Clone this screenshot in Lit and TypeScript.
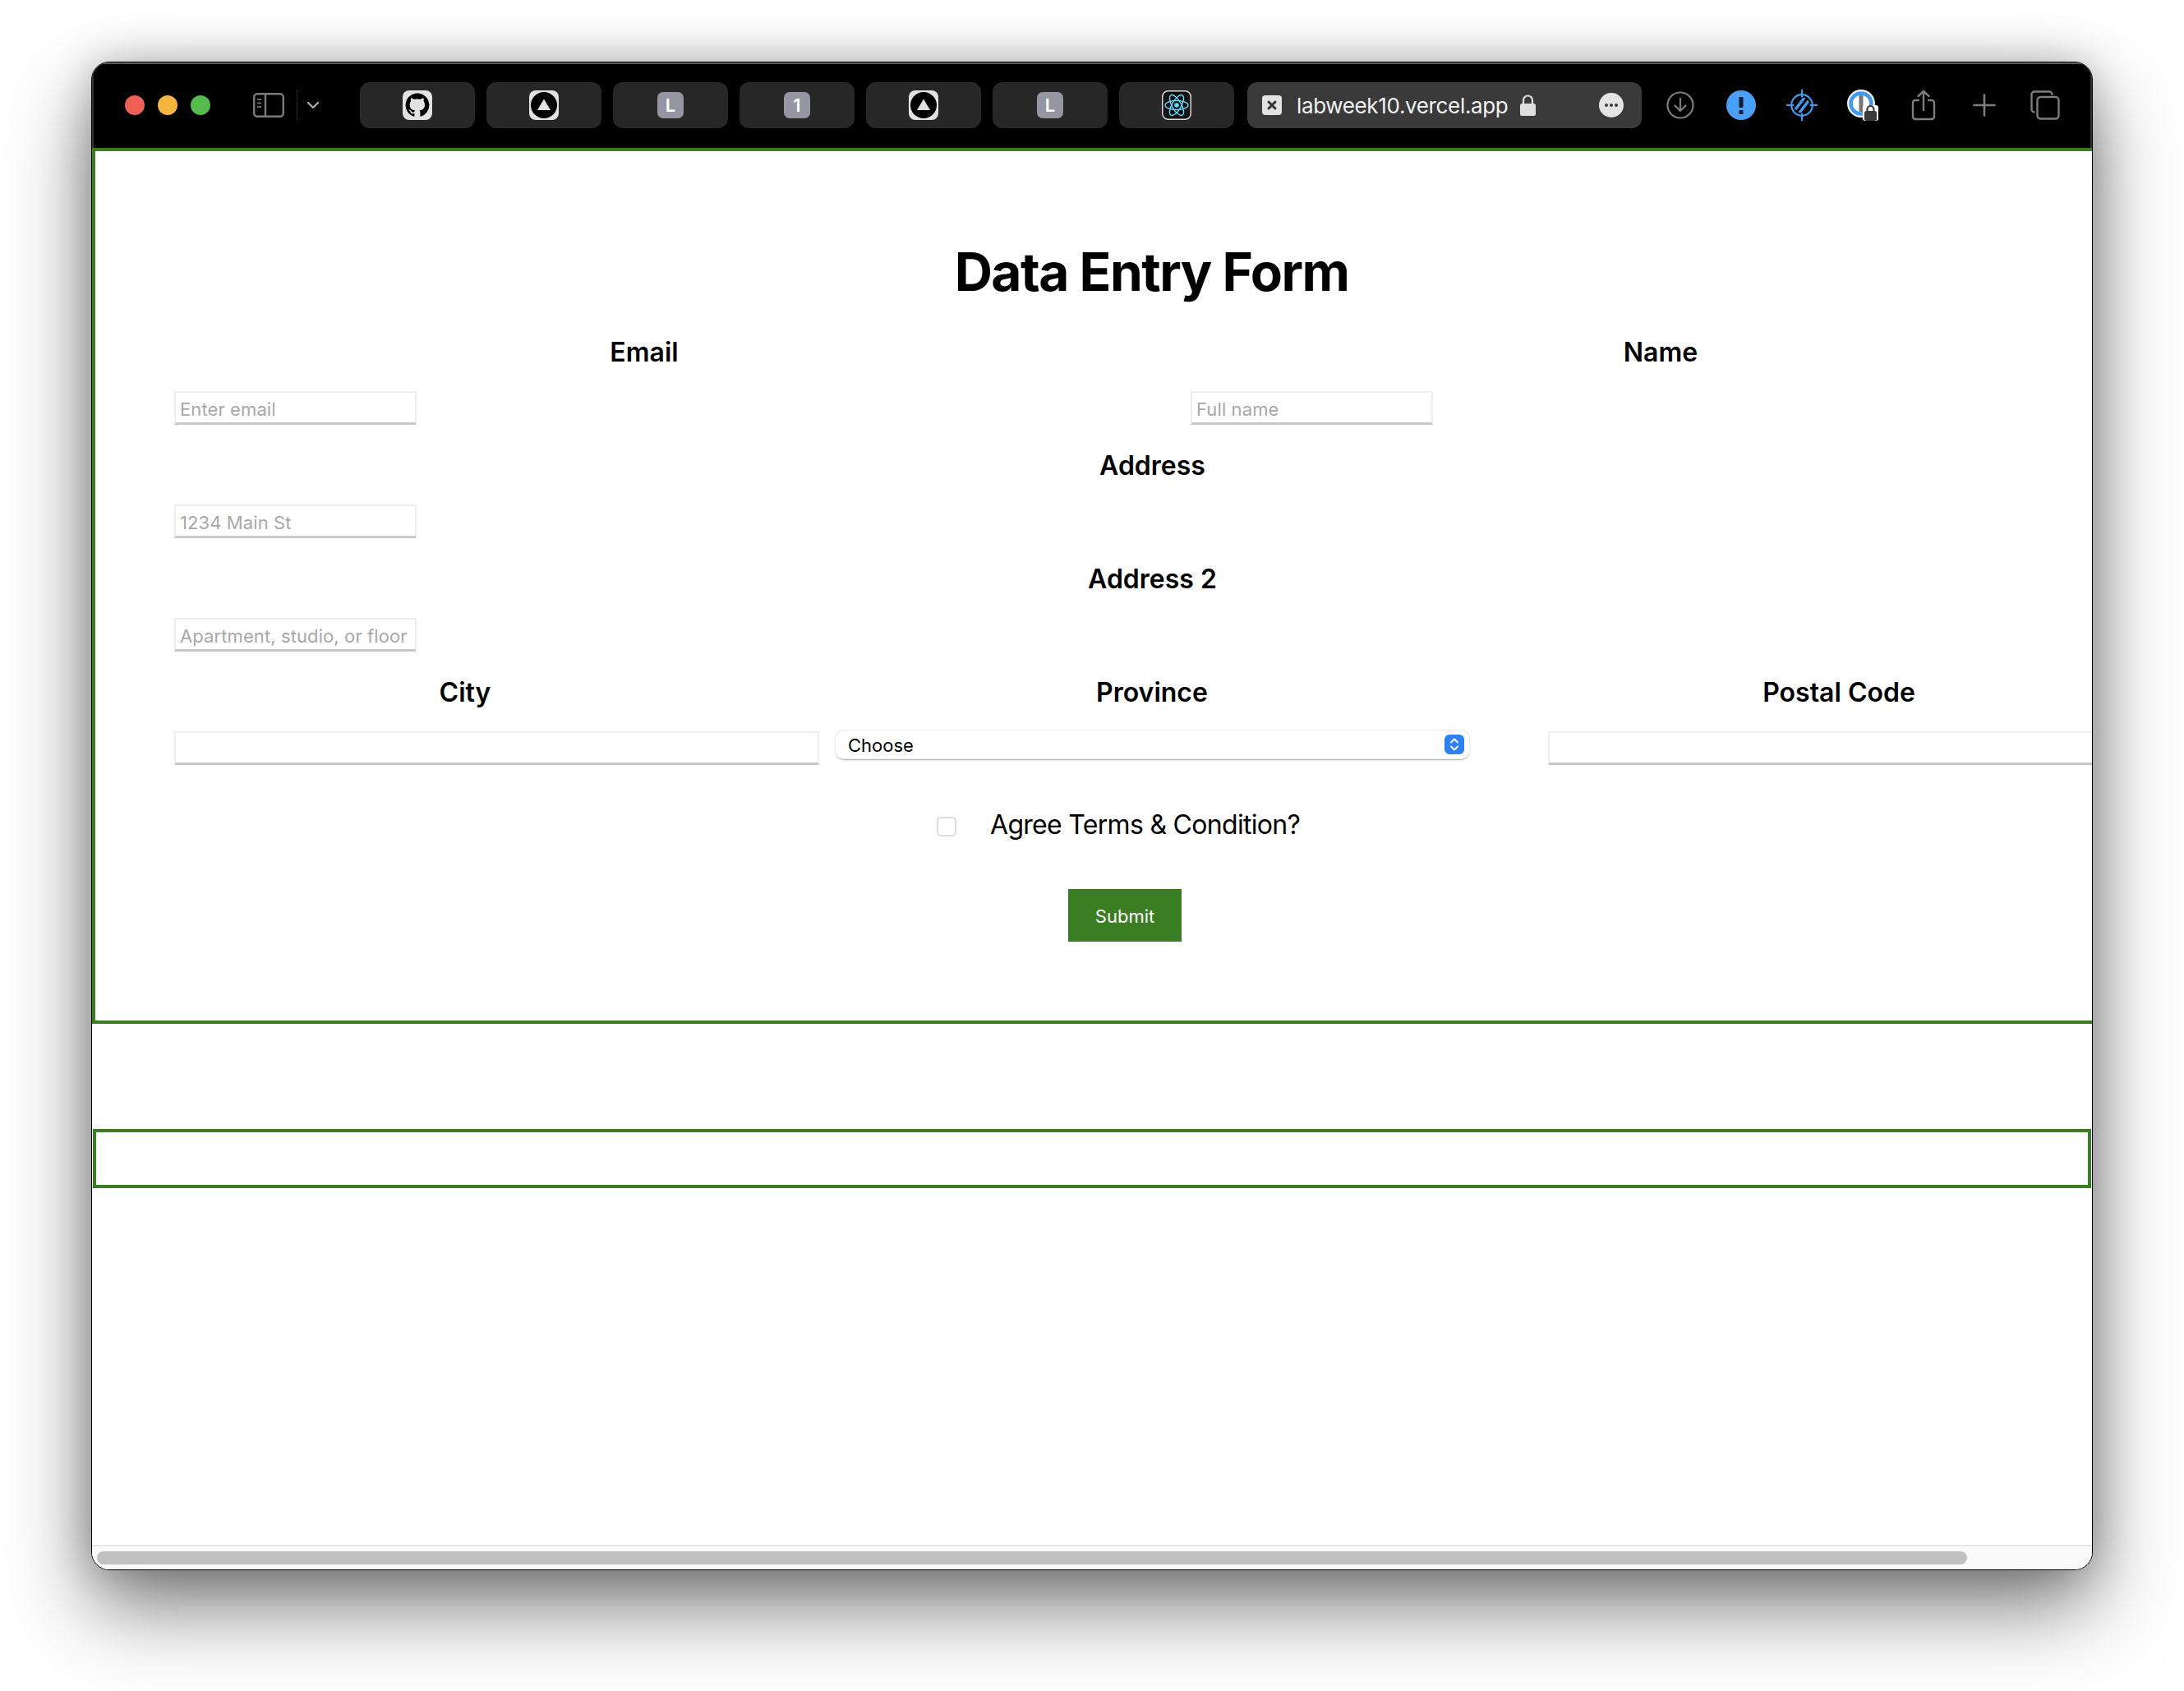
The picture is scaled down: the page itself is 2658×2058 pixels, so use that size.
import { LitElement, html, css, svg } from 'lit';
import { customElement } from 'lit/decorators.js';

const GITHUB_MARK =
  'M8 0C3.58 0 0 3.58 0 8c0 3.54 2.29 6.53 5.47 7.59.4.07.55-.17.55-.38 0-.19-.01-.82-.01-1.49-2.01.37-2.53-.49-2.69-.94-.09-.23-.48-.94-.82-1.13-.28-.15-.68-.52-.01-.53.63-.01 1.08.58 1.23.82.72 1.21 1.87.87 2.2.66.07-.52.28-.87.51-1.07-1.78-.2-3.64-.89-3.64-3.95 0-.87.31-1.59.82-2.15-.08-.2-.36-1.02.08-2.12 0 0 .67-.21 2.2.82.64-.18 1.32-.27 2-.27.68 0 1.36.09 2 .27 1.53-1.04 2.2-.82 2.2-.82.44 1.1.16 1.92.08 2.12.51.56.82 1.27.82 2.15 0 3.07-1.87 3.75-3.65 3.95.29.25.54.73.54 1.48 0 1.07-.01 1.93-.01 2.2 0 .21.15.46.55.38A8.013 8.013 0 0016 8c0-4.42-3.58-8-8-8z';

const githubIcon = svg`<svg width="36" height="36" viewBox="0 0 36 36">
  <rect width="36" height="36" rx="8" fill="#e2e2e2"/>
  <g transform="translate(3.6 3.6) scale(1.8)"><path d=${GITHUB_MARK} fill="#000"/></g>
</svg>`;

const vercelIcon = svg`<svg width="36" height="36" viewBox="0 0 36 36">
  <rect width="36" height="36" rx="8" fill="#e2e2e2"/>
  <circle cx="18" cy="18" r="16" fill="#000"/>
  <path d="M18 10.5 26 24H10z" fill="#e2e2e2"/>
</svg>`;

const reactIcon = svg`<svg width="36" height="36" viewBox="0 0 36 36">
  <rect x=".75" y=".75" width="34.5" height="34.5" rx="7" fill="#111" stroke="#d8d8d8" stroke-width="1.5"/>
  <g fill="none" stroke="#61dafb" stroke-width="1.4">
    <ellipse cx="18" cy="18" rx="14" ry="5.6"/>
    <ellipse cx="18" cy="18" rx="14" ry="5.6" transform="rotate(60 18 18)"/>
    <ellipse cx="18" cy="18" rx="14" ry="5.6" transform="rotate(120 18 18)"/>
  </g>
  <circle cx="18" cy="18" r="2.8" fill="#61dafb"/>
</svg>`;

const sidebarIcon = svg`<svg width="38" height="30" viewBox="0 0 38 30" fill="none" stroke="#7b7b7b" stroke-width="2.4">
  <rect x="1.2" y="1.2" width="35.6" height="27.6" rx="4"/>
  <path d="M15 1.2v27.6"/>
  <path d="M5 8h5M5 12.5h5M5 17h5" stroke-width="2" stroke="#6a6a6a"/>
</svg>`;

const chevronIcon = svg`<svg width="16" height="10" viewBox="0 0 16 10" fill="none" stroke="#a8a8a8" stroke-width="2.4" stroke-linecap="round" stroke-linejoin="round">
  <path d="M2 2l6 6 6-6"/>
</svg>`;

const urlFavicon = svg`<svg width="24" height="24" viewBox="0 0 24 24">
  <rect width="24" height="24" rx="4" fill="#e2e2e2"/>
  <path d="M8 8l8 8M16 8l-8 8" stroke="#333" stroke-width="3" stroke-linecap="round"/>
</svg>`;

const lockIcon = svg`<svg width="21" height="26" viewBox="0 0 21 26">
  <path d="M5 12V7a5.5 5.5 0 0 1 11 0v5" fill="none" stroke="#dedede" stroke-width="2.2"/>
  <rect x="1" y="11" width="19" height="15" rx="2.5" fill="#dedede"/>
</svg>`;

const moreIcon = svg`<svg width="30" height="30" viewBox="0 0 30 30">
  <circle cx="15" cy="15" r="15" fill="#e4e4e4"/>
  <circle cx="9" cy="15" r="2" fill="#3a3a3a"/><circle cx="15" cy="15" r="2" fill="#3a3a3a"/><circle cx="21" cy="15" r="2" fill="#3a3a3a"/>
</svg>`;

const downloadIcon = svg`<svg width="34" height="34" viewBox="0 0 34 34" fill="none" stroke="#7d7d7d" stroke-width="2.2" stroke-linecap="round" stroke-linejoin="round">
  <circle cx="17" cy="17" r="15.5"/>
  <path d="M17 9v15M10.5 17.5 17 24l6.500-6.500"/>
</svg>`;

const alertIcon = svg`<svg width="36" height="36" viewBox="0 0 36 36">
  <circle cx="18" cy="18" r="18" fill="#4aa0f8"/>
  <rect x="15.500" y="8" width="5" height="13" rx="1" fill="#0b1c30"/>
  <rect x="15.500" y="24" width="5" height="5" rx="1" fill="#0b1c30"/>
</svg>`;

// ring with a crosshair, two diagonal bars clipped to the inside of the ring
const targetIcon = svg`<svg width="38" height="38" viewBox="0 0 38 38" fill="none" stroke="#3f9bf0" stroke-width="2.200">
  <defs><clipPath id="target-in"><circle cx="19" cy="19" r="9.500"/></clipPath></defs>
  <circle cx="19" cy="19" r="12.800"/>
  <path d="M19 .5v8M19 29.500v8M.5 19h8M29.500 19h8" stroke-linecap="round"/>
  <g clip-path="url(#target-in)" stroke-width="3.400">
    <path d="M8 28 25 6M13 32 30 10"/>
  </g>
</svg>`;

const onePasswordIcon = svg`<svg width="38" height="38" viewBox="0 0 38 38">
  <circle cx="17" cy="17" r="17" fill="#f4f4f4"/>
  <circle cx="17" cy="17" r="12.500" fill="#fff" stroke="#3f9bf0" stroke-width="4.500"/>
  <rect x="14.500" y="7" width="5" height="20" fill="#777"/>
  <rect x="19" y="19" width="19" height="19" fill="#fff" rx="3"/>
  <rect x="21" y="26" width="15" height="12" rx="2.500" fill="#3a3a3a"/>
  <path d="M24.500 27v-3a4 4 0 0 1 8 0v3" fill="none" stroke="#3a3a3a" stroke-width="2.200"/>
</svg>`;

const shareIcon = svg`<svg width="30" height="38" viewBox="0 0 30 38" fill="none" stroke="#7d7d7d" stroke-width="2.400" stroke-linecap="round" stroke-linejoin="round">
  <path d="M9 13H5a3 3 0 0 0-3 3v17a3 3 0 0 0 3 3h20a3 3 0 0 0 3-3V16a3 3 0 0 0-3-3h-4"/>
  <path d="M15 25V2M8.500 8 15 2l6.500 6"/>
</svg>`;

const plusIcon = svg`<svg width="28" height="28" viewBox="0 0 28 28" stroke="#7d7d7d" stroke-width="2.600" stroke-linecap="round">
  <path d="M14 1.500v25M1.500 14h25"/>
</svg>`;

const tabsIcon = svg`<svg width="36" height="36" viewBox="0 0 36 36" fill="none" stroke="#7d7d7d" stroke-width="2.400">
  <path d="M5.500 26.500H5a3.500 3.500 0 0 1-3.500-3.500V5A3.500 3.500 0 0 1 5 1.500h18A3.500 3.500 0 0 1 26.500 5v.8"/>
  <rect x="8.500" y="8" width="26" height="26.500" rx="4"/>
</svg>`;

const TABS = [
  githubIcon,
  vercelIcon,
  'L',
  '1',
  vercelIcon,
  'L',
  reactIcon,
];

const ACTIONS = [downloadIcon, alertIcon, targetIcon, onePasswordIcon, shareIcon, plusIcon, tabsIcon];

@customElement('app-root')
export class AppRoot extends LitElement {
  static styles = css`
    :host {
      display: block;
      width: 2658px;
      height: 2058px;
      overflow: hidden;
      padding: 75px 0 0 111px;
      box-sizing: border-box;
      background: #fff;
      font-family: Inter, 'Liberation Sans', sans-serif;
    }

    .window {
      width: 2436px;
      height: 1836px;
      box-sizing: border-box;
      display: flex;
      flex-direction: column;
      overflow: hidden;
      background: #fff;
      border: 1px solid #000;
      border-radius: 22px;
      box-shadow: 0 44px 100px rgba(0, 0, 0, 0.52), 0 0 50px rgba(0, 0, 0, 0.22);
    }

    /* browser chrome */
    .toolbar {
      flex: none;
      height: 104px;
      box-sizing: border-box;
      display: flex;
      align-items: center;
      padding-left: 40px;
      background: #000;
      box-shadow: inset 0 2px 0 #5c5c5c, inset 2px 0 0 #333, inset -2px 0 0 #333;
    }
    .lights { display: flex; gap: 16px; margin-right: 52px; }
    .light { width: 24px; height: 24px; border-radius: 50%; }
    .red { background: #ee6055; }
    .amber { background: #f4b63f; }
    .green { background: #55bb4c; }
    .side { display: flex; }
    .divider { width: 1px; height: 36px; background: #2a2a2a; margin: 0 11px 0 15px; }
    .chevron { display: flex; margin-right: 49px; }
    .tabs { display: flex; gap: 14px; }
    .tab {
      width: 140px;
      height: 56px;
      border-radius: 12px;
      background: #272727;
      display: flex;
      align-items: center;
      justify-content: center;
    }
    .tab svg { display: block; }
    .letter {
      width: 32px;
      height: 32px;
      border-radius: 7px;
      background: #9596a2;
      color: #fff;
      font-size: 22px;
      font-weight: 600;
      display: flex;
      align-items: center;
      justify-content: center;
    }
    .url {
      width: 480px;
      height: 56px;
      margin-left: 16px;
      box-sizing: border-box;
      padding: 0 22px 0 18px;
      border-radius: 12px;
      background: #3a3a3a;
      color: #f2f2f2;
      display: flex;
      align-items: center;
      font-size: 26px;
      letter-spacing: -0.35px;
    }
    .url svg { display: block; flex: none; }
    .host { margin-left: 18px; margin-right: 14px; white-space: nowrap; }
    .url .more { margin-left: auto; }
    .actions { display: flex; margin-left: 10px; }
    .action {
      width: 74px;
      height: 56px;
      display: flex;
      align-items: center;
      justify-content: center;
    }
    .action svg { display: block; }

    /* page */
    .page { flex: 1; min-height: 0; overflow: hidden; }
    .panel {
      width: 2579px;
      box-sizing: border-box;
      border: 4px solid #3a7d22;
      padding: 109px 96px 96px;
    }
    h1 {
      margin: 0 0 40px;
      font-size: 64px;
      line-height: 76px;
      font-weight: 700;
      letter-spacing: -1.5px;
      text-align: center;
      color: #000;
    }
    .row { display: grid; height: 138px; }
    .row.two { grid-template-columns: 1142px 1142px; column-gap: 95px; }
    .row.three { grid-template-columns: 706px 706px 706px; column-gap: 130px; height: 108px; }
    .group { min-width: 0; }
    label.title {
      display: block;
      height: 40px;
      box-sizing: border-box;
      margin-bottom: 27px;
      padding-left: 2px;
      font-size: 32px;
      line-height: 40px;
      font-weight: 600;
      text-align: center;
      color: #000;
    }
    input.field {
      display: block;
      width: 295px;
      height: 41px;
      box-sizing: border-box;
      margin: 0;
      padding: 4px 5px 0;
      background: #fff;
      border: 2px solid #eeeeee;
      border-bottom: 3px solid #c8c8c8;
      border-radius: 0;
      outline: none;
      font-family: inherit;
      font-size: 22px;
      letter-spacing: 0.1px;
    }
    input.field::placeholder { color: #a8a8a8; opacity: 1; }
    input.field.wide { width: 785px; }
    .select {
      width: 771px;
      height: 34px;
      margin: -1px 0 0 -31px;
      box-sizing: border-box;
      padding: 2px 6px 0 15px;
      display: flex;
      align-items: center;
      justify-content: space-between;
      background: #fff;
      border-radius: 10px;
      box-shadow: 0 0 0 1px #ececec, 0 2px 2px rgba(0, 0, 0, 0.35);
      font-size: 22px;
      color: #000;
    }
    .stepper {
      width: 24px;
      height: 24px;
      margin-top: -2px;
      border-radius: 6px;
      background: #2f7ff5;
      display: flex;
    }
    .agree {
      display: flex;
      align-items: center;
      gap: 41px;
      height: 40px;
      margin: 52px 0 0 928px;
      font-size: 32px;
      letter-spacing: -0.7px;
      color: #000;
    }
    .agree input {
      appearance: none;
      width: 24px;
      height: 24px;
      margin: 6px 0 0;
      box-sizing: border-box;
      border: 2px solid #dcdcdc;
      border-radius: 5px;
      background: #fff;
    }
    button.submit {
      display: block;
      width: 138px;
      height: 64px;
      margin: 59px 0 0 1088px;
      padding: 2px 0 0;
      border: none;
      background: #3a7d22;
      color: #fff;
      font-family: inherit;
      font-size: 22px;
    }
    .empty {
      height: 72px;
      box-sizing: border-box;
      margin: 128px 1px 0 1px;
      border: 4px solid #3a7d22;
    }

    .track {
      flex: none;
      height: 30px;
      box-sizing: border-box;
      padding: 6px 0 0 6px;
      background: #fafafa;
      border-top: 2px solid #e8e8e8;
    }
    .thumb { width: 2276px; height: 16px; border-radius: 8px; background: #c0c0c0; }
  `;

  private _tab(content: unknown) {
    return html`<div class="tab">
      ${typeof content === 'string' ? html`<span class="letter">${content}</span>` : content}
    </div>`;
  }

  render() {
    return html`
      <div class="window">
        <div class="toolbar">
          <div class="lights">
            <span class="light red"></span>
            <span class="light amber"></span>
            <span class="light green"></span>
          </div>
          <span class="side">${sidebarIcon}</span>
          <span class="divider"></span>
          <span class="chevron">${chevronIcon}</span>
          <div class="tabs">${TABS.map((t) => this._tab(t))}</div>
          <div class="url">
            ${urlFavicon}
            <span class="host">labweek10.vercel.app</span>
            ${lockIcon}
            <span class="more">${moreIcon}</span>
          </div>
          <div class="actions">
            ${ACTIONS.map((a) => html`<span class="action">${a}</span>`)}
          </div>
        </div>
        <div class="page">
          <form class="panel" @submit=${(e: Event) => e.preventDefault()}>
            <h1>Data Entry Form</h1>
            <div class="row two">
              <div class="group">
                <label class="title">Email</label>
                <input class="field" placeholder="Enter email" />
              </div>
              <div class="group">
                <label class="title">Name</label>
                <input class="field" placeholder="Full name" />
              </div>
            </div>
            <div class="row">
              <div class="group">
                <label class="title">Address</label>
                <input class="field" placeholder="1234 Main St" />
              </div>
            </div>
            <div class="row">
              <div class="group">
                <label class="title">Address 2</label>
                <input class="field" placeholder="Apartment, studio, or floor" />
              </div>
            </div>
            <div class="row three">
              <div class="group">
                <label class="title">City</label>
                <input class="field wide" />
              </div>
              <div class="group">
                <label class="title">Province</label>
                <div class="select">
                  <span>Choose</span>
                  <span class="stepper">
                    <svg width="24" height="24" viewBox="0 0 24 24" fill="none" stroke="#fff" stroke-width="2" stroke-linecap="round" stroke-linejoin="round">
                      <path d="M8 9.500l4-4 4 4M8 14.500l4 4 4-4" />
                    </svg>
                  </span>
                </div>
              </div>
              <div class="group">
                <label class="title">Postal Code</label>
                <input class="field wide" />
              </div>
            </div>
            <div class="agree">
              <input type="checkbox" />
              <span>Agree Terms &amp; Condition?</span>
            </div>
            <button class="submit" type="submit">Submit</button>
          </form>
          <div class="empty"></div>
        </div>
        <div class="track"><div class="thumb"></div></div>
      </div>
    `;
  }
}

declare global {
  interface HTMLElementTagNameMap {
    'app-root': AppRoot;
  }
}
